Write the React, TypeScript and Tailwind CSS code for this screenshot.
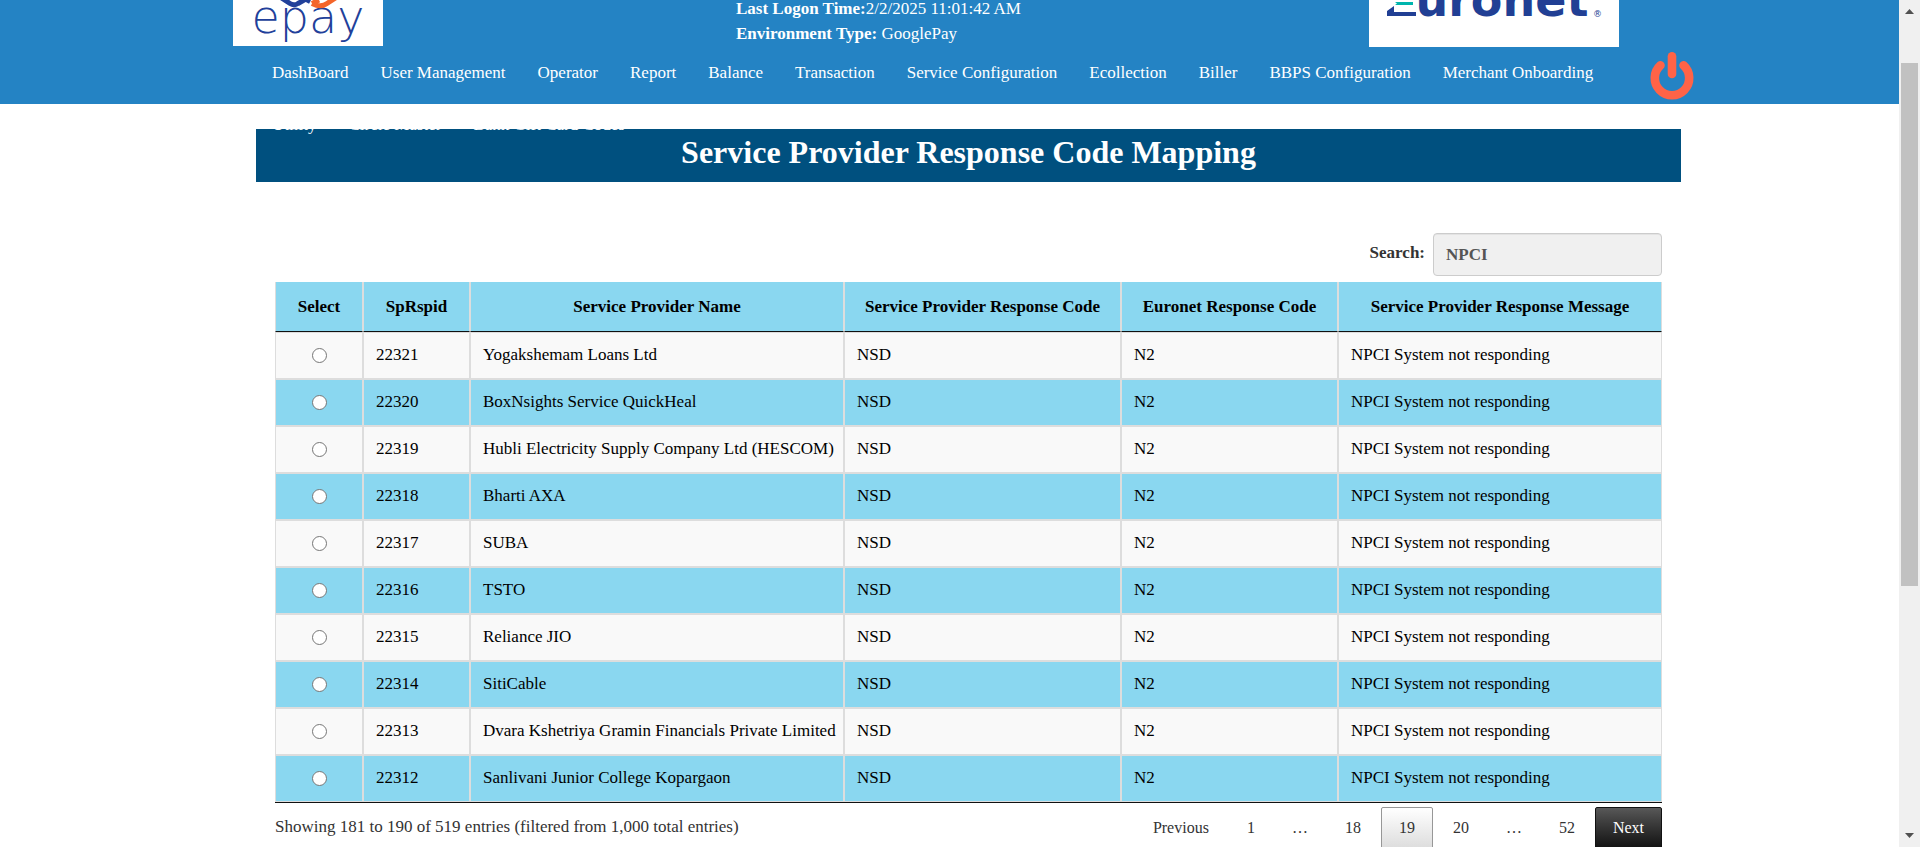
import React from "react";

const menu = [
  "DashBoard",
  "User Management",
  "Operator",
  "Report",
  "Balance",
  "Transaction",
  "Service Configuration",
  "Ecollection",
  "Biller",
  "BBPS Configuration",
  "Merchant Onboarding",
  "Utility",
  "Circle Master",
  "Bank Gift Card Codes",
];

const columns = [
  { label: "Select", width: "w-[88px]" },
  { label: "SpRspid", width: "w-[107px]" },
  { label: "Service Provider Name", width: "w-[374px]" },
  { label: "Service Provider Response Code", width: "w-[277px]" },
  { label: "Euronet Response Code", width: "w-[217px]" },
  { label: "Service Provider Response Message", width: "" },
];

const rows = [
  { id: "22321", name: "Yogakshemam Loans Ltd" },
  { id: "22320", name: "BoxNsights Service QuickHeal" },
  { id: "22319", name: "Hubli Electricity Supply Company Ltd (HESCOM)" },
  { id: "22318", name: "Bharti AXA" },
  { id: "22317", name: "SUBA" },
  { id: "22316", name: "TSTO" },
  { id: "22315", name: "Reliance JIO" },
  { id: "22314", name: "SitiCable" },
  { id: "22313", name: "Dvara Kshetriya Gramin Financials Private Limited" },
  { id: "22312", name: "Sanlivani Junior College Kopargaon" },
];

const pages = ["Previous", "1", "…", "18", "19", "20", "…", "52", "Next"];

function EpayLogo() {
  return (
    <svg className="block h-[46px] w-[150px] bg-white" viewBox="0 0 150 46" role="img" aria-label="epay">
      <text x="75" y="33" textAnchor="middle" fontSize="46" fontWeight="200" fill="#21409a" fontFamily="'DejaVu Sans', sans-serif">
        epay
      </text>
      <path d="M44 -5 L57 3.5 Q61 6 65 3.5 L80 -5" fill="none" stroke="#21409a" strokeWidth="5" />
      <path d="M64 -5 L77 2" fill="none" stroke="#21409a" strokeWidth="4" />
      <path d="M79 3.5 L86 0 M79 3.5 Q88 8 94 3.5 L107 -5" fill="none" stroke="#f4652a" strokeWidth="5" />
    </svg>
  );
}

function EuronetLogo() {
  return (
    <svg className="block h-[47px] w-[250px] bg-white" viewBox="0 0 250 47" role="img" aria-label="Euronet">
      <text x="15" y="16" fontSize="46" fontWeight="700" fill="#213f94" fontFamily="'DejaVu Sans', sans-serif">
        Euronet
      </text>
      <path d="M16 0 H48 V17 H16 Z" fill="#fff" />
      <path d="M18 16 V11 L25 6 V12 H47 V16 Z" fill="#213f94" />
      <path d="M26 2 H44 V5 H26 L28 3.5 Z" fill="#00b5ad" />
      <text x="224" y="17" fontSize="9" fill="#213f94" fontFamily="'DejaVu Sans', sans-serif">
        ®
      </text>
    </svg>
  );
}

function PowerIcon() {
  return (
    <svg className="block h-12 w-11" viewBox="0 0 44 48" fill="none" stroke="#ff6347" strokeWidth="8.6" strokeLinecap="round" aria-hidden="true">
      <path d="M10.5 13.3 A17.2 17.2 0 1 0 33.5 13.3" />
      <path d="M22 4.3 V22" />
    </svg>
  );
}

function Header() {
  return (
    <header className="relative z-10 h-[104px] bg-[#2483c4] text-[17px] text-white">
      <div className="flex h-[46px] items-start pl-[233px]">
        <EpayLogo />
        <div className="-mt-1 ml-[353px] w-[633px] leading-[25px]">
          <p>
            <b>Last Logon Time:</b>2/2/2025 11:01:42 AM
          </p>
          <p>
            <b>Environment Type:</b> GooglePay
          </p>
        </div>
        <EuronetLogo />
      </div>
      <div className="flex items-start pl-[257px]">
        <nav className="flex w-[1386px] flex-wrap gap-x-0.5">
          {menu.map((item) => (
            <a key={item} href="#" className="px-[15px] pt-4 pb-3.5 leading-[22px] whitespace-nowrap">
              {item}
            </a>
          ))}
        </nav>
        <button type="button" aria-label="Log out" className="ml-[7px] pt-1.5">
          <PowerIcon />
        </button>
      </div>
    </header>
  );
}

function ScrollTrack() {
  return (
    <div className="flex w-[21px] shrink-0 flex-col items-center bg-[#f0f0f0]" aria-hidden="true">
      <svg className="mt-[9px] block h-[5px] w-[9px]" viewBox="0 0 9 5" fill="#505050">
        <path d="M0 5 L4.5 0 L9 5 Z" />
      </svg>
      <div className="mt-[49px] h-[523px] w-[17px] bg-[#c1c1c1]" />
      <svg className="mt-auto mb-[9px] block h-[5px] w-[9px]" viewBox="0 0 9 5" fill="#505050">
        <path d="M0 0 L4.5 5 L9 0 Z" />
      </svg>
    </div>
  );
}

function pageClass(page: string) {
  if (page === "19") return "border-[#979797] bg-linear-to-b from-white to-[#dcdcdc] text-[#333]";
  if (page === "Next") return "border-[#111] bg-linear-to-b from-[#585858] to-[#111] text-white";
  return "border-transparent text-[#333]";
}

export default function App() {
  return (
    <div className="flex h-screen overflow-hidden bg-white font-['Liberation_Serif',serif] text-[17px] text-[#333]">
      <div className="min-w-0 flex-1 overflow-hidden">
        <Header />
        <main className="mt-[25px] mr-[218px] ml-64">
          <h1 className="h-[53px] bg-[#00507f] text-center text-[32px] leading-[47px] font-bold text-white">
            Service Provider Response Code Mapping
          </h1>
          <div className="px-[19px] pt-[51px]">
            <div className="flex items-start justify-end gap-2">
              <label htmlFor="search" className="pt-2 leading-6 font-bold">
                Search:
              </label>
              <input
                id="search"
                type="text"
                defaultValue="NPCI"
                className="h-[43px] w-[229px] rounded-[4px] border border-[#ccc] bg-[#f0f0f0] px-3 font-bold text-[#555] inset-shadow-2xs outline-none"
              />
            </div>
            <table className="mt-1.5 w-full table-fixed border-separate border-spacing-0 border-b border-[#111] text-black">
              <thead>
                <tr>
                  {columns.map((c) => (
                    <th
                      key={c.label}
                      className={`${c.width} h-[50px] border-x border-b border-x-[#ddd] border-b-[#111] bg-[#8ad7f0] p-0 font-bold`}
                    >
                      {c.label}
                    </th>
                  ))}
                </tr>
              </thead>
              <tbody>
                {rows.map((r) => (
                  <tr
                    key={r.id}
                    className="odd:bg-[#f9f9f9] even:bg-[#8ad7f0] *:h-[47px] *:border *:border-[#ddd] *:px-3 *:pt-0 *:pb-0.5"
                  >
                    <td>
                      <input
                        type="radio"
                        name="mapping"
                        aria-label={`Select ${r.id}`}
                        className="mx-auto mt-0.5 block size-[15px] appearance-none rounded-full border border-[#767676] bg-white"
                      />
                    </td>
                    <td>{r.id}</td>
                    <td className="whitespace-nowrap">{r.name}</td>
                    <td>NSD</td>
                    <td>N2</td>
                    <td>NPCI System not responding</td>
                  </tr>
                ))}
              </tbody>
            </table>
            <div className="flex items-start justify-between">
              <p className="pt-3 leading-6">Showing 181 to 190 of 519 entries (filtered from 1,000 total entries)</p>
              <div className="flex gap-0.5 pt-1 text-base">
                {pages.map((p, i) =>
                  p === "…" ? (
                    <span key={i} className="px-[17px] pt-2 pb-2 leading-[26px]">
                      {p}
                    </span>
                  ) : (
                    <button key={i} type="button" className={`rounded-[2px] border px-[17px] pt-[7px] pb-2 leading-[26px] ${pageClass(p)}`}>
                      {p}
                    </button>
                  ),
                )}
              </div>
            </div>
          </div>
        </main>
      </div>
      <ScrollTrack />
    </div>
  );
}
